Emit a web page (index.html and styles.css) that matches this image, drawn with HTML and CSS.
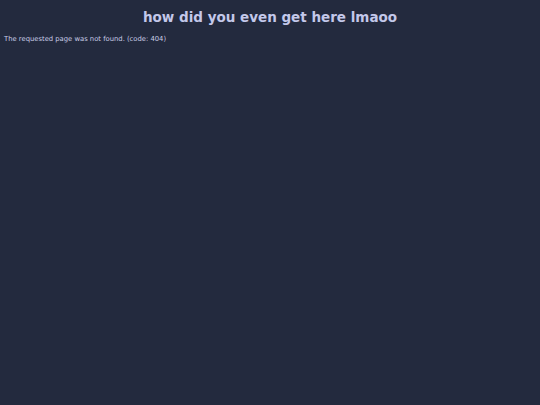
FILE: index.html
```html
<!DOCTYPE html>
<html lang="en">
<head>
    <meta charset="UTF-8">
    <title>404</title>
    <link rel="stylesheet" href="styles.css">
</head>
<body>
    <h1 class="title">how did you even get here lmaoo</h1>
    <p class="message">The requested page was not found. (code: 404)</p>
</body>
</html>
```

FILE: styles.css
```css
body {
    font-family: 'DejaVu Sans', sans-serif;
    background-color: #232a3e;
    color: #c8cce6;
    margin: 0;
    padding: 9px 4px;
}

.title {
    text-align: center;
    font-size: 13.5px;
    font-weight: bold;
    color: #c3c8ea;
    margin: 0 0 10px;
}

.message {
    font-size: 6.8px;
    margin: 0;
}
```
